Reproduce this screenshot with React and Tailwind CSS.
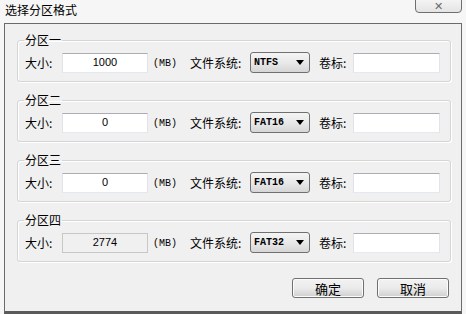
import { useState } from "react";

const cjk = "font-['Noto_Sans_CJK_SC','Noto_Sans',sans-serif]";
const mono = "font-['Liberation_Mono','DejaVu_Sans_Mono',monospace]";

const partitions = [
  { name: "分区一", size: "1000", fs: "NTFS" },
  { name: "分区二", size: "0", fs: "FAT16" },
  { name: "分区三", size: "0", fs: "FAT16" },
  { name: "分区四", size: "2774", fs: "FAT32", disabled: true },
];

function Select({ value }) {
  return (
    <div className="w-[60px] h-[21px] flex items-center justify-between pl-[3px] pr-[5px] border border-[#707070] rounded-[3px] bg-gradient-to-b from-[#f4f4f4] via-[#e9e9e9] to-[#d6d6d6]">
      <span className={`${mono} text-[10px] font-bold text-black leading-none`}>{value}</span>
      <svg width="8" height="5" viewBox="0 0 8 5">
        <path d="M0 0h8L4 5z" fill="#000" />
      </svg>
    </div>
  );
}

function Group({ name, size, fs, disabled }) {
  const [label, setLabel] = useState("");
  return (
    <fieldset className="border border-[#d5d5d5] rounded-[3px] pl-[6px] pt-[5px] pb-[8px] shadow-[inset_1px_1px_0_#fff,1px_1px_0_#fff]">
      <legend className="px-[1px] text-[12px] leading-[14px] text-black">{name}</legend>
      <div className="flex items-center pl-[1px] text-[12px] text-black">
        <span className="w-[37px]">大小:</span>
        <div
          className={`w-[86px] h-[20px] flex items-center justify-center border ${
            disabled ? "bg-[#f0f0f0] border-[#c7c7c7]" : "bg-white border-[#abadb3] border-x-[#e2e3ea] border-b-[#e3e9ef]"
          }`}
        >
          <span className="font-['Liberation_Sans',sans-serif] text-[11px] leading-none">{size}</span>
        </div>
        <span className={`${mono} text-[10px] leading-[14px] w-[42px] pl-[5px] pt-[3px]`}>(MB)</span>
        <span className="w-[60px]">文件系统:</span>
        <Select value={fs} />
        <span className="w-[34px] ml-[9px]">卷标:</span>
        <input
          value={label}
          onChange={(e) => setLabel(e.target.value)}
          className="w-[87px] h-[20px] bg-white border border-[#abadb3] border-x-[#e2e3ea] border-b-[#e3e9ef] outline-none px-1 text-[12px]"
        />
      </div>
    </fieldset>
  );
}

function Button({ children }) {
  return (
    <button className="w-[72px] h-[20px] flex items-center justify-center border border-[#707070] rounded-[3px] bg-gradient-to-b from-[#f2f2f2] via-[#ebebeb] to-[#cfcfcf] text-[13px] leading-none text-black shadow-[inset_0_0_0_1px_#fcfcfc]">
      {children}
    </button>
  );
}

export default function App() {
  return (
    <div className={`w-[466px] h-[314px] overflow-hidden bg-[#f6f6f6] flex flex-col ${cjk}`}>
      {/* Title bar */}
      <div className="h-[23px] flex items-start justify-between pl-[5px] pr-[4px]">
        <span className="text-[12px] leading-[12px] pt-[4px] text-black">选择分区格式</span>
        <div className="w-[47px] h-[14px] -mt-[1px] flex items-center justify-center border border-[#6f6f6f] rounded-b-[4px] bg-gradient-to-b from-[#f4f4f4] to-[#e4e4e4]">
          <span className="font-['DejaVu_Sans',sans-serif] text-[11px] leading-none text-[#6a6a6a]">✕</span>
        </div>
      </div>

      {/* Dialog body */}
      <div className="ml-[4px] mr-[4px] flex-1 bg-[#f0f0f0] border border-[#6b6b6b] border-b-[3px] border-b-[#5a5a5a] flex flex-col pt-[9px] pl-[12px] pr-[10px]">
        <div className="flex flex-col gap-[11px]">
          {partitions.map((p) => (
            <Group key={p.name} {...p} />
          ))}
        </div>
        <div className="flex justify-end gap-[13px] mt-[16px] pr-[2px]">
          <Button>确定</Button>
          <Button>取消</Button>
        </div>
      </div>
    </div>
  );
}
